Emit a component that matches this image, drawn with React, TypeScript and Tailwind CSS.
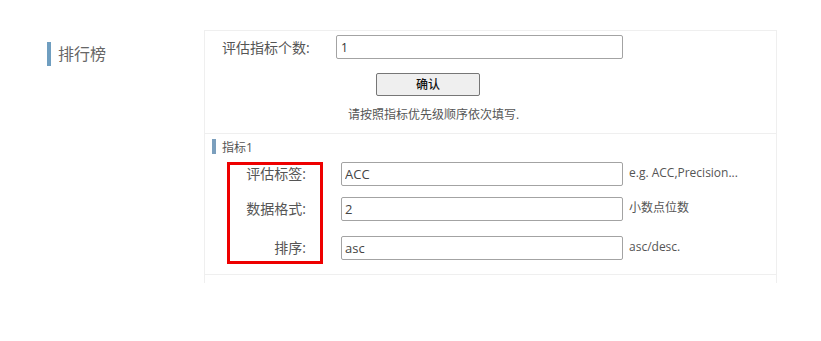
import React from 'react';

const FONT = { fontFamily: '"Open Sans", "Noto Sans CJK SC", sans-serif' };

type Metric = { label: string; value: string; hint: string; gap: string };

const ROWS: Metric[] = [
    { label: '评估标签:', value: 'ACC', hint: 'e.g. ACC,Precision...', gap: 'mt-[8px]' },
    { label: '数据格式:', value: '2', hint: '小数点位数', gap: 'mt-[11px]' },
    { label: '排序:', value: 'asc', hint: 'asc/desc.', gap: 'mt-[15px]' },
];

const MetricRow: React.FC<{ row: Metric }> = ({ row }) => (
    <div className={`flex items-start ${row.gap}`}>
        <label className="w-[101px] h-[24px] leading-[24px] text-right text-[14px] text-[#555]">{row.label}</label>
        <input
            readOnly
            value={row.value}
            className="ml-[35px] w-[282px] h-[24px] px-[3px] border border-[#a3a3a3] rounded-[2px] text-[13px] text-[#444] outline-none"
        />
        <span className="ml-[6px] leading-[22px] text-[12px] text-[#555]">{row.hint}</span>
    </div>
);

const App: React.FC = () => {
    return (
        <div className="w-[821px] h-[341px] bg-white flex pt-[30px]" style={FONT}>
            <div className="w-[204px] pl-[47px] pt-[12px]">
                <h2 className="border-l-4 border-[#6f9ec0] pl-[7px] h-[24px] leading-[24px] text-[16px] text-[#666] font-normal">排行榜</h2>
            </div>

            <div className="w-[573px] h-[253px] border border-b-0 border-[#efefef]">
                <div className="border-b border-[#efefef] pb-[10px]">
                    <div className="pt-[4px] flex items-center h-[28px]">
                        <label className="pl-[17px] w-[131px] text-[14px] text-[#555]">评估指标个数:</label>
                        <input
                            readOnly
                            value="1"
                            className="w-[287px] h-[24px] px-[4px] border border-[#a3a3a3] rounded-[2px] text-[12px] text-[#333] outline-none"
                        />
                    </div>
                    <button className="mt-[14px] ml-[171px] block w-[104px] h-[23px] bg-[#efefef] border border-[#767676] rounded-[2px] text-[12px] text-[#111] font-medium">
                        确认
                    </button>
                    <p className="mt-[11px] pl-[143px] leading-[16px] text-[12px] text-[#555]">请按照指标优先级顺序依次填写.</p>
                </div>

                <div className="relative border-b border-[#efefef] pt-[5px] pb-[14px]">
                    <div className="ml-[7px] border-l-4 border-[#7b9fbd] pl-[6px] h-[15px] leading-[17px] text-[12px] text-[#555]">指标1</div>
                    {ROWS.map(row => (
                        <MetricRow key={row.label} row={row} />
                    ))}
                    <div className="absolute left-[22px] top-[28px] w-[96px] h-[102px] border-[3px] border-[#ee0000] pointer-events-none"></div>
                </div>
            </div>
        </div>
    );
};

export default App;
